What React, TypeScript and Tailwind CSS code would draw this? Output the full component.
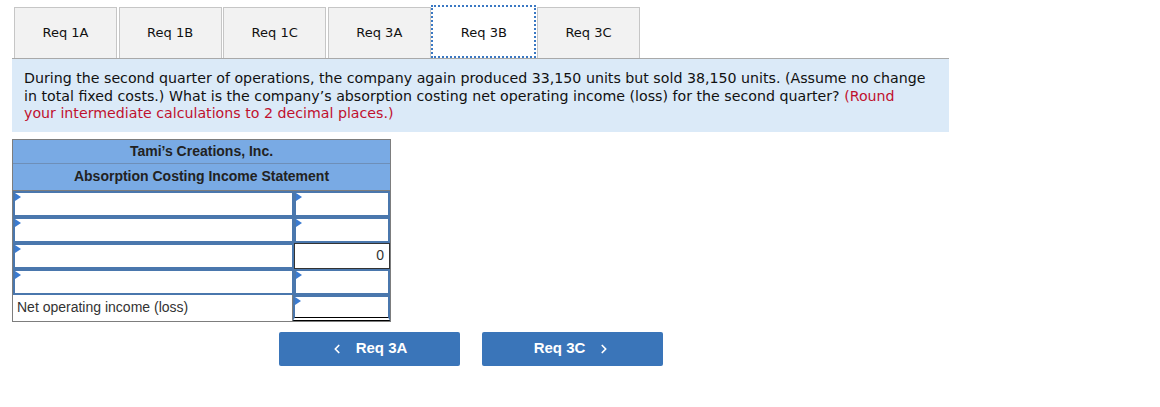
import { ChevronLeft, ChevronRight } from "lucide-react"

const tabs = ['Req 1A', 'Req 1B', 'Req 1C', 'Req 3A', 'Req 3B', 'Req 3C']

const Marker = () => (
  <span className="absolute left-0 top-0 w-0 h-0 border-t-[4px] border-b-[4px] border-l-[6px] border-t-transparent border-b-transparent border-l-[#3b7bd0]" />
)

const InputCell = ({ w, double }: { w: string; double?: boolean }) => (
  <div className={`relative ${w} h-[26px] bg-white border-2 border-[#4a77ad] ${double ? 'border-b-[4px] border-b-black border-double' : ''}`}>
    <Marker />
  </div>
)

const App = () => {
  return (
    <div className="w-[1160px] h-[407px] bg-white font-['Verdana','DejaVu_Sans',sans-serif] text-[#111]">
      <div className="pt-[7px] pl-[12px] w-[949px]">
        <div className="flex gap-[1.6px] pl-[2px] border-b border-[#a9a9a9]">
          {tabs.map((t) => (
            t === 'Req 3B' ? (
              <div key={t} className="w-[105px] h-[53px] -mt-[2px] -mx-[1px] flex items-center justify-center bg-white border-2 border-dotted border-[#3a78c3] text-[13px] pt-[2px]">
                {t}
              </div>
            ) : (
              <div key={t} className="w-[103px] h-[51px] flex items-center justify-center bg-[#f2f2f2] border border-b-0 border-[#c6c6c6] text-[13px]">
                {t}
              </div>
            )
          ))}
        </div>

        <div className="bg-[#dbeaf8] pl-[12px] pr-[20px] pt-[11px] pb-[9px] text-[14.2px] leading-[17.5px]">
          During the second quarter of operations, the company again produced 33,150 units but sold 38,150 units. (Assume no change in total fixed costs.) What is the company’s absorption costing net operating income (loss) for the second quarter? <span className="text-[#c0112e]">(Round your intermediate calculations to 2 decimal places.)</span>
        </div>
      </div>

      <div className="ml-[12px] mt-[7px] w-[379px] font-['Liberation_Sans','Arial',sans-serif]">
        <div className="border border-[#7d7d7d] bg-[#79aae4] text-[#222] font-bold text-[14px]">
          <div className="h-[24px] flex items-center justify-center border-b border-[#6e8fb8]">Tami’s Creations, Inc.</div>
          <div className="h-[26px] flex items-center justify-center">Absorption Costing Income Statement</div>
        </div>
        <div className="flex flex-col">
          <div className="flex border-x border-[#7d7d7d]">
            <InputCell w="w-[281px]" />
            <InputCell w="w-[96px]" />
          </div>
          <div className="flex border-x border-[#7d7d7d]">
            <InputCell w="w-[281px]" />
            <InputCell w="w-[96px]" />
          </div>
          <div className="flex border-x border-[#7d7d7d]">
            <InputCell w="w-[281px]" />
            <div className="w-[96px] h-[26px] bg-white border border-[#333] flex items-center justify-end pr-[5px] text-[14px] text-[#333]">0</div>
          </div>
          <div className="flex border-x border-[#7d7d7d]">
            <InputCell w="w-[281px]" />
            <InputCell w="w-[96px]" />
          </div>
          <div className="flex border-x border-b border-[#7d7d7d]">
            <div className="w-[281px] h-[26px] flex items-center pl-[4px] text-[14px] text-[#333] border-r border-[#7d7d7d]">Net operating income (loss)</div>
            <InputCell w="w-[97px]" double />
          </div>
        </div>
      </div>

      <div className="flex gap-[22px] ml-[279px] mt-[10px] font-['Liberation_Sans','Arial',sans-serif]">
        <button className="w-[181px] h-[34px] rounded-[2px] bg-[#3a75b9] text-white font-bold text-[15px] flex items-center justify-center gap-[12px] pr-[2px]">
          <ChevronLeft size={14} strokeWidth={3} />
          Req 3A
        </button>
        <button className="w-[181px] h-[34px] rounded-[2px] bg-[#3a75b9] text-white font-bold text-[15px] flex items-center justify-center gap-[12px]">
          Req 3C
          <ChevronRight size={14} strokeWidth={3} />
        </button>
      </div>
    </div>
  )
}

export default App
